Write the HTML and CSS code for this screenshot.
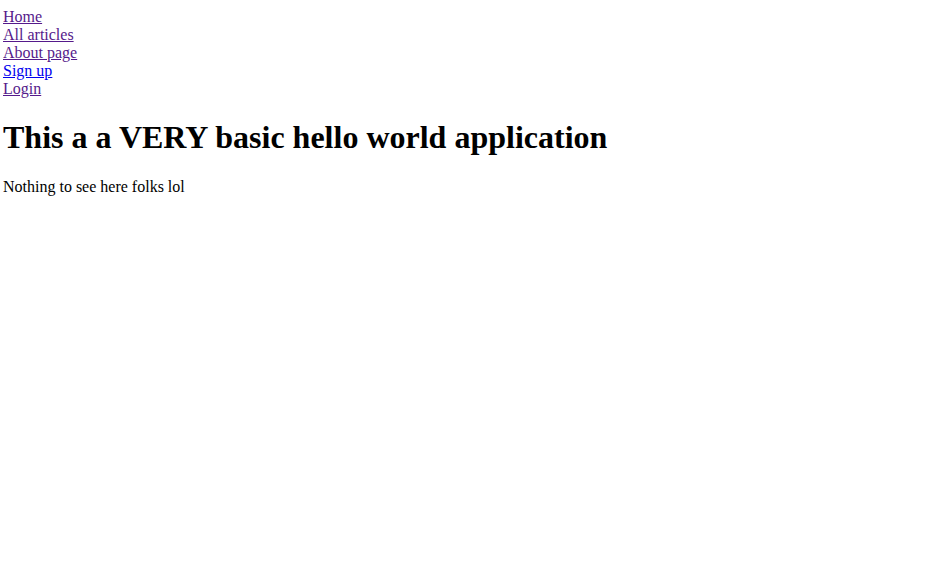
FILE: index.html
```html
<!DOCTYPE html>
<html>
<head>
<meta charset="utf-8">
<title>Hello world</title>
<link rel="stylesheet" href="styles.css">
</head>
<body class="page">
<nav class="nav">
<a class="nav-link visited" href="#home">Home</a>
<a class="nav-link visited" href="#articles">All articles</a>
<a class="nav-link visited" href="#about">About page</a>
<a class="nav-link" href="#signup">Sign up</a>
<a class="nav-link visited" href="#login">Login</a>
</nav>
<h1 class="title">This a a VERY basic hello world application</h1>
<p class="text">Nothing to see here folks lol</p>
</body>
</html>
```
FILE: styles.css
```css
.page {
  margin: 8px 3px;
  font-family: "Liberation Serif", "Times New Roman", serif;
  font-size: 16px;
  color: #000;
  background: #fff;
}
.nav {
  display: flex;
  flex-direction: column;
  align-items: flex-start;
}
.nav-link {
  line-height: 18px;
  color: #0000ee;
  text-decoration: underline;
}
.nav-link.visited {
  color: #551a8b;
}
.title {
  font-size: 32px;
  font-weight: bold;
  margin: 21.44px 0;
}
.text {
  margin: 16px 0;
}
```
